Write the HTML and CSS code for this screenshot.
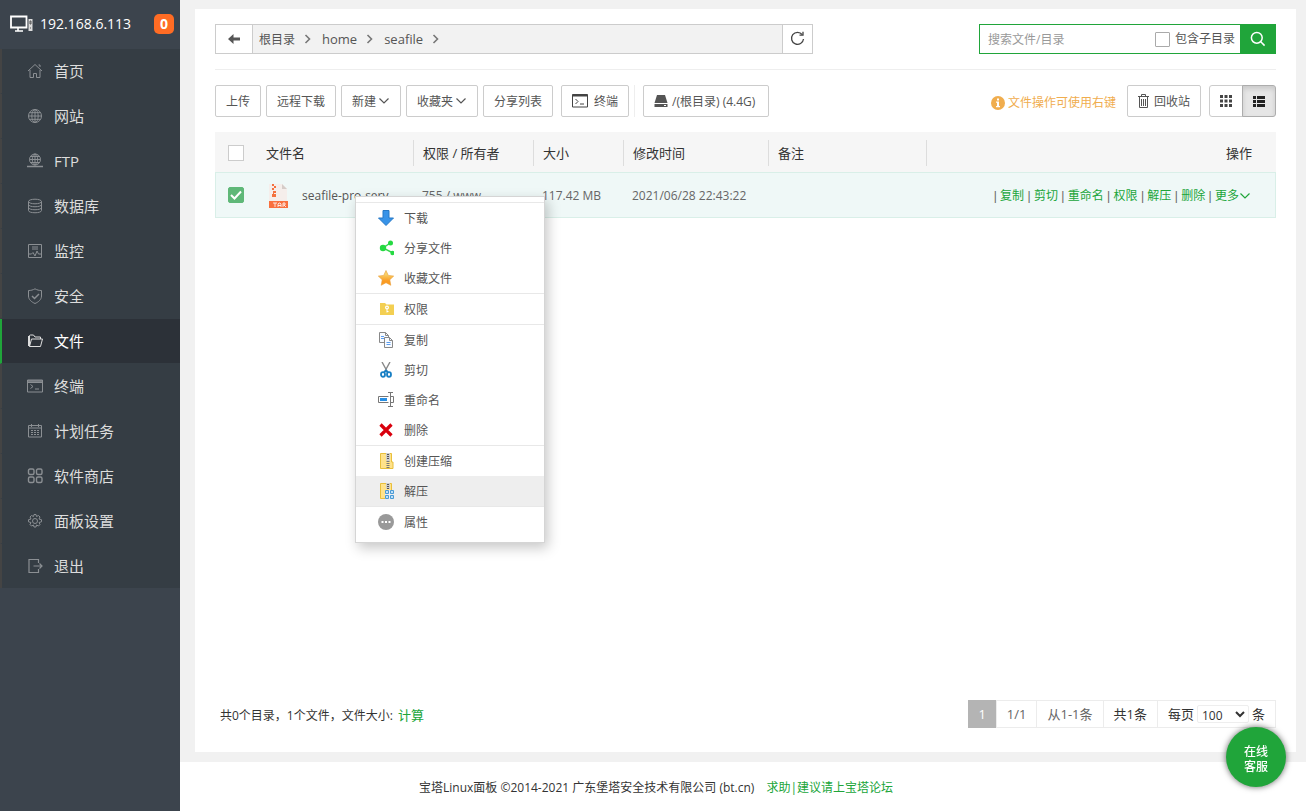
FILE: index.html
```html
<!DOCTYPE html>
<html lang="zh-CN">
<head>
<meta charset="utf-8">
<title>宝塔Linux面板</title>
<link rel="stylesheet" href="styles.css">
</head>
<body>
<svg class="defs" aria-hidden="true">
  <symbol id="chev" viewBox="0 0 12 12"><path d="M1.500 3.500 6 8l4.500-4.500" fill="none" stroke="currentColor" stroke-width="1.200"/></symbol>
  <symbol id="crumb" viewBox="0 0 8 10"><path d="M1.500 1 5.500 5l-4 4" fill="none" stroke="currentColor" stroke-width="1.600"/></symbol>
</svg>
<div class="layout">
  <aside class="sidebar">
    <header class="host">
      <svg class="host-icon" width="23" height="18" viewBox="0 0 23 18" fill="none"><path d="M1 1.500h15.500v11H1z" stroke="#fff" stroke-width="1.800"/><path d="M8 13v3M5 16h8" stroke="#fff" stroke-width="1.600"/><path d="M18.500 4h4v12h-4z" fill="#ddd"/><path d="M20 6h1v3h-1zM20 13h1" stroke="#555"/></svg>
      <span class="host-name">192.168.6.113</span>
      <span class="count">0</span>
    </header>
    <nav>
      <ul class="menu">
        <li><a href="#"><svg viewBox="0 0 16 16"><path d="M1 8l7-6.500L15 8M3 7v7.500h3.500v-4h3v4H13V7M11.500 2H13v2"/></svg>首页</a></li>
        <li><a href="#"><svg viewBox="0 0 16 16"><circle cx="8" cy="8" r="6.500"/><ellipse cx="8" cy="8" rx="3.200" ry="6.500"/><path d="M8 1.500v13M1.500 8h13M2.500 4.700h11M2.500 11.300h11"/></svg>网站</a></li>
        <li><a href="#"><svg viewBox="0 0 16 16"><circle cx="8" cy="6.500" r="5.500"/><ellipse cx="8" cy="6.500" rx="2.700" ry="5.500"/><path d="M8 1v11M2.500 6.500h11M3.500 3.500h9M3.500 9.500h9"/><path d="M0 13.500h16M6 13.500h4" stroke-width="1.500"/></svg>FTP</a></li>
        <li><a href="#"><svg viewBox="0 0 16 16"><ellipse cx="8" cy="3.500" rx="6.500" ry="2.300"/><path d="M1.500 3.500v9c0 3 13 3 13 0v-9M1.500 6.500c0 3 13 3 13 0M1.500 9.500c0 3 13 3 13 0"/></svg>数据库</a></li>
        <li><a href="#"><svg viewBox="0 0 16 16"><path d="M1.500 1.500h13v13h-13zM5 4h6M5 6h6M1.500 11h3L6 9.500 8 13l2-5 1.500 3h3"/></svg>监控</a></li>
        <li><a href="#"><svg viewBox="0 0 16 16"><path d="M8 .8C6 2 4 2.500 1.500 2.500V8c0 3.500 3 6 6.500 7.500 3.500-1.500 6.500-4 6.500-7.500V2.500C12 2.500 10 2 8 .8z"/><path d="M5 8l2.500 2.500L12 6" stroke-width="1.500"/></svg>安全</a></li>
        <li class="active"><a href="#"><svg viewBox="0 0 16 16"><path d="M2.500 13.500V2.500l1-.5h3l1.500 2h5.500V6M2.500 13.500 4.500 6h11l-2 7.500zM1.500 3v10"/></svg>文件</a></li>
        <li><a href="#"><svg viewBox="0 0 16 16"><path d="M.500 2h15v12H.500zM.500 4.500h15M8 11h4M3.500 6.500 6 8.500l-2.500 2"/><path d="M1 3h14" stroke-width="1.500"/></svg>终端</a></li>
        <li><a href="#"><svg viewBox="0 0 16 16"><path d="M1.500 2.500h13v11.500h-13zM1.500 5h13M4.500 1v3M11.500 1v3"/><path d="M4 7.500h8M4 9.500h8M4 11.500h8" stroke-dasharray="2 1"/></svg>计划任务</a></li>
        <li><a href="#"><svg viewBox="0 0 16 16" stroke-width="1.400"><rect x="1.500" y="1" width="5.500" height="5.500" rx="1.500"/><rect x="9.500" y="1" width="5.500" height="5.500" rx="1.500"/><rect x="1.500" y="9" width="5.500" height="5.500" rx="1.500"/><rect x="9.500" y="9" width="5.500" height="5.500" rx="1.500"/></svg>软件商店</a></li>
        <li><a href="#"><svg viewBox="0 0 16 16"><circle cx="8" cy="8" r="2.500"/><path d="M7 1.500h2l.5 2 2-1L13 4l-1 2 2.500.7v2.100l-2.500.7 1 2-1.500 1.500-2-1-.5 2H7l-.5-2-2 1L3 11.500l1-2-2.500-.7V6.700L4 6 3 4l1.500-1.500 2 1z"/></svg>面板设置</a></li>
        <li><a href="#"><svg viewBox="0 0 16 16" stroke-width="1.200"><path d="M11.500 5V1.500H2v13h9.500V11M6.500 8H15M12.500 5.500 15 8l-2.500 2.500"/></svg>退出</a></li>
      </ul>
    </nav>
  </aside>

  <div class="page">
    <main class="panel">
      <div class="path-row">
        <div class="path">
          <button class="back" aria-label="返回"><svg width="12" height="10" viewBox="0 0 12 10"><path d="M0 5 5.500 0v3.500H12v3H5.500V10z" fill="#555"/></svg></button>
          <nav class="crumbs">
            <a href="#">根目录</a><svg><use href="#crumb"/></svg>
            <a href="#">home</a><svg><use href="#crumb"/></svg>
            <a href="#">seafile</a><svg><use href="#crumb"/></svg>
          </nav>
          <button class="reload" aria-label="刷新"><svg width="16" height="16" viewBox="0 0 16 16" fill="none" stroke="#444" stroke-width="1.300"><path d="M12.300 3.700A6 6 0 1 0 13.500 8"/><path d="M13 .800v3.400H9.500"/></svg></button>
        </div>
        <form class="search">
          <input class="search-text" type="text" aria-label="搜索" placeholder="搜索文件/目录">
          <label class="sub"><input class="box small" type="checkbox">包含子目录</label>
          <button class="go" type="button" aria-label="搜索"><svg width="16" height="16" viewBox="0 0 16 16" fill="none" stroke="#fff" stroke-width="1.500"><circle cx="6.800" cy="6.800" r="5.400"/><path d="M10.800 10.800l3.800 3.800"/></svg></button>
        </form>
      </div>

      <div class="toolbar">
        <button class="btn">上传</button>
        <button class="btn">远程下载</button>
        <button class="btn">新建<svg class="chev"><use href="#chev"/></svg></button>
        <button class="btn">收藏夹<svg class="chev"><use href="#chev"/></svg></button>
        <button class="btn">分享列表</button>
        <button class="btn term"><svg width="16" height="14" viewBox="0 0 16 14" fill="none" stroke="#444"><path d="M.5.500h15v12.500H.5z"/><path d="M.5 1.500h15" stroke-width="2"/><path d="M3.500 5 6 7.500 3.500 10M8 10h4"/></svg>终端</button>
        <span class="bar"></span>
        <button class="btn disk"><svg width="14" height="14" viewBox="0 0 14 14" fill="#555"><path d="M3 1h8l2.500 8H.5zM.5 10h13v3H.5z"/><path d="M10 11.500h2" stroke="#fff"/></svg>/(根目录) (4.4G)</button>
        <span class="tip"><svg width="14" height="14" viewBox="0 0 14 14"><circle cx="7" cy="7" r="7" fill="#f0ad4e"/><path d="M6 2.500h2v2H6zM5 5.500h3v4.500h1v1.200H5V10h1V6.700H5z" fill="#fff"/></svg>文件操作可使用右键</span>
        <button class="btn bin"><svg width="11" height="14" viewBox="0 0 11 14" fill="none" stroke="#555"><path d="M0 2.500h11M3.500 2V.5h4V2M1.500 3v10.500h8V3M3.500 5v7M5.500 5v7M7.500 5v7"/></svg>回收站</button>
        <div class="views">
          <button aria-label="图标视图"><svg width="12" height="12" viewBox="0 0 12 12" fill="#444"><path d="M0 0h3v3H0zM4.500 0h3v3h-3zM9 0h3v3H9zM0 4.500h3v3H0zM4.500 4.500h3v3h-3zM9 4.500h3v3H9zM0 9h3v3H0zM4.500 9h3v3h-3zM9 9h3v3H9z"/></svg></button>
          <button class="on" aria-label="列表视图"><svg width="12" height="11" viewBox="0 0 12 11" fill="#222"><path d="M0 0h3v3H0zM4 0h8v3H4zM0 4h3v3H0zM4 4h8v3H4zM0 8h3v3H0zM4 8h8v3H4z"/></svg></button>
        </div>
      </div>

      <div class="files">
        <table class="grid">
          <colgroup><col class="c-check"><col class="c-name"><col class="c-perm"><col class="c-size"><col class="c-time"><col class="c-note"><col></colgroup>
          <thead>
            <tr>
              <th class="check"><input class="box" type="checkbox" aria-label="全选"></th>
              <th><span>文件名</span></th><th><span>权限 / 所有者</span></th><th><span>大小</span></th><th><span>修改时间</span></th><th><span>备注</span></th>
              <th class="ops">操作</th>
            </tr>
          </thead>
          <tbody>
            <tr>
              <td class="check"><input class="box" type="checkbox" aria-label="选择文件" checked></td>
              <td><div class="file"><svg width="21" height="26" viewBox="0 0 21 26"><path d="M1 1h13l5 5v13H1z" fill="#f5eeeb"/><path d="M14 1l5 5h-5z" fill="#d5ccc8"/><path d="M4 1h2v2H4zM6 3h2v2H6zM4 5h2v2H4zM5 8h3v2H6v1h2v3H4v-3h1z" fill="#f4713f"/><path d="M1 18h19v7H1z" fill="#f9703e"/><path d="M5 20h4M7 20v4M10 24v-3l1-1h1l1 1v3M10 22.500h3M15 24v-4h2v2h-2M16 22l2 2" fill="none" stroke="#fff" stroke-width=".8"/></svg><span>seafile-pro-serv</span></div></td>
              <td>755 / www</td>
              <td>117.42 MB</td>
              <td>2021/06/28 22:43:22</td>
              <td></td>
              <td class="ops links">| <a href="#">复制</a> | <a href="#">剪切</a> | <a href="#">重命名</a> | <a href="#">权限</a> | <a href="#">解压</a> | <a href="#">删除</a> | <a href="#">更多<svg class="chev"><use href="#chev"/></svg></a></td>
            </tr>
          </tbody>
        </table>
      </div>

      <div class="bottom">
        <p class="stats">共0个目录，1个文件，文件大小: <a href="#">计算</a></p>
        <div class="pager">
          <span class="current">1</span><span>1/1</span><span>从1-1条</span><span class="dark">共1条</span>
          <label class="dark">每页<select><option>100</option></select>条</label>
        </div>
      </div>
    </main>
    <footer class="foot"><span>宝塔Linux面板 ©2014-2021 广东堡塔安全技术有限公司 (bt.cn)</span><a href="#">求助|建议请上宝塔论坛</a></footer>
  </div>
</div>

<ul class="context">
  <li class="line"><button><svg viewBox="0 0 16 16"><path d="M5 .5h6V8h4.500L8 15.500.5 8H5z" fill="#3793e8" stroke="#2679c6"/></svg>下载</button></li>
  <li><button><svg viewBox="0 0 16 16"><path d="M13 2.500 5 8l10 5" fill="none" stroke="#35d84c" stroke-width="1.400"/><g fill="#25d942"><circle cx="5" cy="8" r="3.200"/><circle cx="12.500" cy="3" r="2.500"/><circle cx="14.500" cy="13" r="2.200"/></g></svg>分享文件</button></li>
  <li><button><svg viewBox="0 0 16 16"><defs><linearGradient id="gold" x2="0" y2="1"><stop offset=".25" stop-color="#f8d36a"/><stop offset=".7" stop-color="#fb9b22"/></linearGradient></defs><path d="M8 .5l2.300 4.900 5.400.7-3.900 3.700 1 5.500L8 12.700l-4.800 2.600 1-5.500L.3 6.100l5.400-.7z" fill="url(#gold)" stroke="#e9a03b" stroke-width=".6"/></svg>收藏文件</button></li>
  <li class="line"><button><svg viewBox="0 0 16 16"><path d="M2 2h5l1.500 1.500H16V14H2z" fill="#f3cf52"/><circle cx="9" cy="6.500" r="1.400" fill="none" stroke="#fff" stroke-width="1.200"/><path d="M9 8v3.500M9 10.500h1.500" stroke="#fff"/></svg>权限</button></li>
  <li class="line"><button><svg viewBox="0 0 16 16" stroke="#888" fill="#f8fbff"><path d="M1.500.500h6l3 3V10.500h-9z"/><path d="M6.500 5.500h5l3 3v7h-8z"/><path d="M11.500 5.500v3h3M7.500.500v3h3" fill="none"/><path d="M3 4.500h3M3 6.500h3M8.500 10.500h4M8.500 12.500h4" stroke="#5a9cf0"/></svg>复制</button></li>
  <li><button><svg viewBox="0 0 16 16" fill="none"><path d="M4 0l5.500 10M12 0 6.500 10" stroke="#888" stroke-width="1.400"/><g stroke="#187fc4" stroke-width="1.800"><ellipse cx="5" cy="12.500" rx="2" ry="2.300"/><ellipse cx="11" cy="12.500" rx="2" ry="2.300"/><path d="M6 10.500l2-2 2 2"/></g></svg>剪切</button></li>
  <li><button><svg viewBox="0 0 16 16" fill="none"><path d="M10.500 4.500H.5v6h10M12 4.500h3.500v6H12M10 .5h5M10 14.500h5M12.500 1v13" stroke="#777"/><path d="M2 6h7v3H2z" fill="#278fe5"/></svg>重命名</button></li>
  <li><button><svg viewBox="0 0 16 16"><path d="M2.500 2.500l11 11M13.500 2.500l-11 11" stroke="#d9000d" stroke-width="3.200"/></svg>删除</button></li>
  <li class="line"><button><svg viewBox="0 0 16 16"><path d="M2.500.500h11V9h1.500v6.500H2.500z" fill="#ffe28a" stroke="#e8bf3c"/><path d="M8 0h4v7l-1 1H9L8 7z" fill="#ccc"/><path d="M10 1v6" stroke="#555" stroke-dasharray="1 1" stroke-width="2"/><path d="M10 8v7" stroke="#777" stroke-width="3" stroke-dasharray="1 1"/></svg>创建压缩</button></li>
  <li class="hover"><button><svg viewBox="0 0 16 16"><path d="M2.500.500h11v15h-11z" fill="#ffe28a" stroke="#e8bf3c"/><path d="M8 0h4v6H8z" fill="#ccc"/><path d="M10 1v6" stroke="#555" stroke-dasharray="1 1" stroke-width="2"/><path d="M7 7h9v9H7z" fill="#eee"/><path d="M7.500 7.500h3v3h-3zM12.500 7.500h3v3h-3zM7.500 12.500h3v3h-3zM12.500 12.500h3v3h-3z" fill="#bfe0fa" stroke="#4a9ad4"/></svg>解压</button></li>
  <li class="line"><button><svg viewBox="0 0 16 16"><circle cx="8" cy="8" r="8" fill="#999"/><path d="M3.500 7h2v2h-2zM7 7h2v2H7zM10.500 7h2v2h-2z" fill="#fff"/></svg>属性</button></li>
</ul>

<button class="service">在线<br>客服</button>
</body>
</html>
```

FILE: styles.css
```css
* { box-sizing: border-box; }
body {
  margin: 0;
  background: #fff;
  color: #555;
  font: 12px/18px "Open Sans", "Noto Sans CJK SC", sans-serif;
}
ul { list-style: none; margin: 0; padding: 0; }
a { color: #20a53a; text-decoration: none; }
button, input, select { font: inherit; color: inherit; margin: 0; }
button { cursor: pointer; padding: 0; }
svg { flex: none; }
.defs { position: absolute; width: 0; height: 0; }

.layout { display: grid; grid-template-columns: 180px 1fr; min-height: 100vh; }

.sidebar { background: #3c444d; }
.host { display: flex; align-items: center; height: 49px; padding: 0 6px 2px 10px; color: #fff; }
.host-name { margin-left: 7px; font-size: 14px; }
.count {
  width: 20px; height: 20px; margin-left: auto;
  border-radius: 5px; background: #ff6c24;
  font-weight: 700; font-size: 14px; line-height: 20px; text-align: center;
}
.menu { background: #353d44; }
.menu li { height: 45px; border-left: 2px solid #444; border-bottom: 1px solid #353d44; }
.menu li:last-child { height: 44px; border-bottom: 0; }
.menu a { display: flex; align-items: center; gap: 11px; height: 44px; padding-left: 25px; color: #ddd; font-size: 15px; }
.menu li.active { border-left-color: #20a53a; background: #2c3138; }
.menu li.active a { color: #fff; }
.menu svg { width: 16px; height: 16px; fill: none; stroke: #8b8f93; }
.menu .active svg { stroke: #ddd; }

.page { display: flex; flex-direction: column; min-width: 0; background: #f1f1f1; }
.panel { flex: 1; display: flex; flex-direction: column; margin: 9px 10px 10px 15px; padding: 15px 20px 24px; background: #fff; }

.path-row { display: flex; justify-content: space-between; gap: 20px; padding-bottom: 15px; border-bottom: 1px solid #eee; }
.path { display: flex; flex: 0 1 598px; height: 30px; border: 1px solid #ccc; }
.path button { border: 0; background: #fff; display: grid; place-items: center; }
.path .back { width: 37px; border-right: 1px solid #ccc; }
.path .reload { width: 30px; border-left: 1px solid #ccc; }
.crumbs { flex: 1; display: flex; align-items: center; padding-left: 6px; background: #f2f2f2; font-size: 13px; }
.crumbs a { color: #555; }
.crumbs a:first-child { padding-top: 1px; font-size: 12px; }
.crumbs svg { width: 8px; height: 10px; margin: 0 10px 0 9px; color: #777; }

.search { display: flex; flex: 0 1 297px; height: 30px; border: 1px solid #20a53a; }
.search-text { flex: 1; min-width: 0; border: 0; padding: 2px 8px 0; outline: 0; background: #fff; }
.search-text::placeholder { color: #999; opacity: 1; }
.sub { display: flex; align-items: center; gap: 5px; padding-right: 5px; }
.go { width: 35px; border: 0; background: #20a53a; display: grid; place-items: center; }

.box { appearance: none; width: 16px; height: 16px; border: 1px solid #ccc; background: #fff; }
.box.small { width: 15px; height: 15px; border-color: #aaa; border-radius: 1px; }
.box:checked {
  border-color: #5fb878;
  border-radius: 2px;
  background: #5fb878 url("data:image/svg+xml,%3Csvg xmlns='http://www.w3.org/2000/svg' viewBox='0 0 14 14'%3E%3Cpath d='M2 7l3.500 3.500L12 3.500' fill='none' stroke='white' stroke-width='2'/%3E%3C/svg%3E") center / 14px no-repeat;
}

.toolbar { display: flex; align-items: center; gap: 5px; padding: 15px 0; }
.btn {
  display: flex; align-items: center; height: 32px; padding: 2px 10px 0;
  border: 1px solid #ccc; border-radius: 2px; background: #fff; white-space: nowrap;
}
.btn svg { margin-bottom: 2px; }
.chev { width: 12px; height: 12px; }
.btn .chev { margin-left: 2px; }
.term { margin-left: 3px; gap: 6px; }
.bar { width: 1px; height: 32px; background: #eee; }
.disk { margin-left: 3px; gap: 4px; padding-right: 13px; }
.tip { display: flex; align-items: center; gap: 3px; margin-left: auto; padding-top: 4px; color: #f0ad4e; }
.bin { margin-left: 6px; gap: 5px; }
.views { display: flex; margin-left: 3px; }
.views button { width: 34px; height: 32px; display: grid; place-items: center; border: 1px solid #ccc; border-radius: 3px 0 0 3px; background: #fff; }
.views .on { margin-left: -1px; border-color: #adadad; border-radius: 0 3px 3px 0; background: #e6e6e6; box-shadow: inset 0 3px 5px rgba(0,0,0,.125); }

.files { flex: 1; }
.grid { width: 100%; table-layout: fixed; border-collapse: separate; border-spacing: 0; }
.c-check { width: 42px; }
.c-name { width: 157px; }
.c-perm { width: 120px; }
.c-size { width: 90px; }
.c-time { width: 145px; }
.c-note { width: 158px; }
th, td { padding: 2px 0 0; text-align: left; white-space: nowrap; }
th { height: 40px; background: #f6f6f6; color: #333; font-size: 13px; font-weight: 400; }
th span { display: block; height: 26px; padding-left: 9px; border-right: 1px solid #ddd; line-height: 26px; }
td { height: 46px; padding-left: 8px; border: solid #d9efe8; border-width: 1px 0; background: #eff8f7; color: #666; }
td:first-child { border-left-width: 1px; }
td:last-child { border-right-width: 1px; }
th.check, td.check { padding: 0 0 0 12px; }
th.check { padding: 2px 0 0 13px; }
.check .box { display: block; }
.file { display: flex; align-items: center; gap: 13px; padding-left: 3px; }
.file span { color: #555; }
th.ops, td.ops { padding-right: 24px; text-align: right; }
.links { font-family: "Liberation Sans", "Noto Sans CJK SC", sans-serif; }
.ops .chev { vertical-align: -2px; }

.bottom { display: flex; justify-content: space-between; align-items: center; color: #333; }
.stats { margin: 0; padding: 2px 0 0 5px; }
.stats a { margin-left: 2px; font-size: 13px; }
.pager { display: flex; height: 28px; border: 1px solid #ececec; border-left: 0; font-size: 13px; line-height: 26px; color: #666; }
.pager > * { padding: 0 10px; border-left: 1px solid #ececec; }
.pager > :first-child { border: 0; }
.pager .current { margin: -1px 0; background: #b4b4b4; color: #fff; line-height: 28px; }
.pager .dark { color: #333; }
.pager label { display: flex; align-items: center; gap: 3px; }
.pager select { width: 52px; height: 18px; border: 1px solid #eee; border-radius: 2px; background: #fff; line-height: 16px; padding: 0; font-size: 12px; }

.foot { display: flex; justify-content: center; gap: 12px; height: 49px; padding-top: 17px; padding-right: 174px; background: #fff; color: #333; }

.context {
  position: absolute; left: 355px; top: 196px; width: 190px; padding: 5px 0;
  border: 1px solid #d5d5d5; background: #fff; box-shadow: 3px 5px 12px rgba(0,0,0,.22);
}
.context .line { border-top: 1px solid #e8e8e8; }
.context button { display: flex; align-items: center; gap: 10px; width: 100%; height: 30px; padding: 2px 0 0 22px; border: 0; background: none; }
.context svg { width: 16px; height: 16px; margin-bottom: 2px; }
.context .hover { background: #eee; }

.service {
  position: fixed; right: 20px; bottom: 24px; width: 60px; height: 60px; padding-top: 4px;
  border: 0; border-radius: 50%; background: #20a53a; color: #fff;
  font-weight: 500; line-height: 15px; box-shadow: 0 0 6px rgba(0,0,0,.6);
}
```
